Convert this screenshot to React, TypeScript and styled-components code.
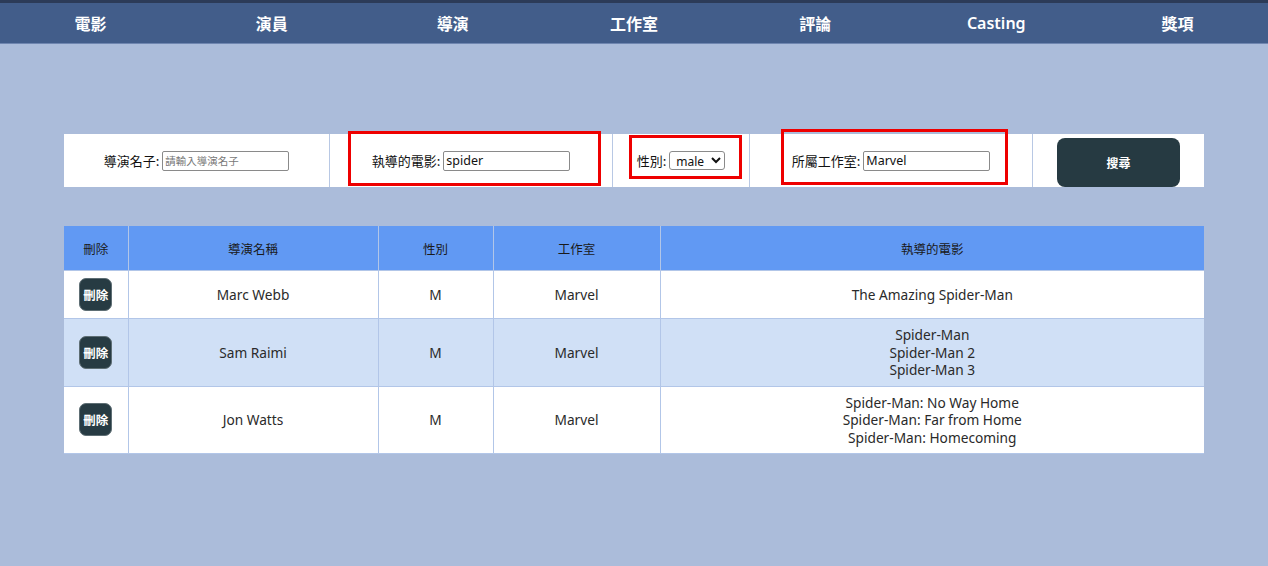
import React from "react";
import styled, { createGlobalStyle } from "styled-components";

const GlobalStyle = createGlobalStyle`
  html, body {
    margin: 0;
    padding: 0;
    background: #abbcda;
    font-family: "Noto Sans", "Noto Sans CJK TC", sans-serif;
  }
`;

const Page = styled.div`
  min-height: 566px;
  background: #abbcda;
`;

const Nav = styled.nav`
  display: grid;
  grid-template-columns: repeat(7, 1fr);
  height: 40px;
  background: #425d8a;
  border-top: 3px solid #2c3b58;
  border-bottom: 1px solid #6f86b0;
`;

const NavItem = styled.a`
  display: flex;
  align-items: center;
  justify-content: center;
  color: #ffffff;
  font-family: "Noto Sans", "Noto Sans CJK TC", sans-serif;
  font-size: 16px;
  font-weight: 600;
  text-decoration: none;
  padding-bottom: 1px;
`;

const Content = styled.main`
  width: 1140px;
  margin: 90px auto 0;
  display: flex;
  flex-direction: column;
  gap: 39px;
`;

const SearchBar = styled.form`
  display: grid;
  grid-template-columns: 265px 283px 137px 283px 172px;
  height: 53px;
  background: #ffffff;
`;

const SearchCell = styled.div<{ $first?: boolean }>`
  position: relative;
  display: flex;
  align-items: center;
  justify-content: center;
  gap: 3px;
  border-left: ${(p) => (p.$first ? "none" : "1px solid #b8c8e4")};
  box-sizing: border-box;
`;

const Label = styled.label`
  font-family: "Noto Sans CJK TC", "Noto Sans", sans-serif;
  font-size: 13px;
  color: #111;
  white-space: nowrap;
`;

const TextInput = styled.input`
  box-sizing: border-box;
  width: 127px;
  height: 20px;
  padding: 0 2px;
  border: 1px solid #8a8a8a;
  border-radius: 2px;
  font-family: "Noto Sans", "Noto Sans CJK TC", sans-serif;
  font-size: 12.5px;
  color: #111;
  outline: none;
  &::placeholder {
    font-family: "Noto Sans CJK TC", sans-serif;
    font-size: 10.5px;
    color: #777;
  }
`;

const Select = styled.select`
  box-sizing: border-box;
  width: 56px;
  height: 19px;
  padding: 0 0 0 2px;
  border: 1px solid #8a8a8a;
  border-radius: 3px;
  background: #fff;
  font-family: "Noto Sans", sans-serif;
  font-size: 12px;
  color: #111;
`;

const Annotation = styled.div<{ $top: number; $left: number; $w: number; $h: number }>`
  position: absolute;
  top: ${(p) => p.$top}px;
  left: ${(p) => p.$left}px;
  width: ${(p) => p.$w}px;
  height: ${(p) => p.$h}px;
  box-sizing: border-box;
  border: 3px solid #ee0000;
  pointer-events: none;
`;

const SearchButton = styled.button`
  width: 123px;
  height: 49px;
  margin-top: 3px;
  border: none;
  border-radius: 8px;
  background: #263a42;
  color: #ffffff;
  font-family: "Noto Sans CJK TC", sans-serif;
  font-size: 12px;
  font-weight: 700;
  cursor: pointer;
`;

const Table = styled.table`
  width: 1140px;
  border-collapse: collapse;
  table-layout: fixed;
  background: #ffffff;
`;

const Col = styled.col<{ $w?: number }>`
  width: ${(p) => (p.$w ? `${p.$w}px` : "auto")};
`;

const HeadCell = styled.th`
  height: 44px;
  padding: 0;
  background: #6199f3;
  border-left: 1px solid #b2c6e8;
  border-bottom: 1px solid #b2c6e8;
  font-family: "Noto Sans CJK TC", sans-serif;
  font-size: 12.5px;
  font-weight: 400;
  color: #1a1a1a;
  &:first-child {
    border-left: none;
  }
`;

const Row = styled.tr<{ $alt?: boolean }>`
  background: ${(p) => (p.$alt ? "#d0e0f6" : "#ffffff")};
`;

const Cell = styled.td`
  padding: 7px 0;
  border-left: 1px solid #b2c6e8;
  border-bottom: 1px solid #b2c6e8;
  text-align: center;
  vertical-align: middle;
  font-family: "Noto Sans", "Noto Sans CJK TC", sans-serif;
  font-size: 13.7px;
  line-height: 17.5px;
  color: #2a2a2a;
  &:first-child {
    border-left: none;
  }
`;

const DeleteButton = styled.button`
  width: 33px;
  height: 33px;
  margin: 0 auto;
  padding: 0;
  border: 1px solid #5e6e74;
  border-radius: 7px;
  background: #273b43;
  color: #ffffff;
  font-family: "Noto Sans CJK TC", sans-serif;
  font-size: 12.5px;
  font-weight: 700;
  display: flex;
  align-items: center;
  justify-content: center;
  cursor: pointer;
`;

const MovieLine = styled.div`
  white-space: nowrap;
`;

const navItems = ["電影", "演員", "導演", "工作室", "評論", "Casting", "獎項"];

const directors = [
  { name: "Marc Webb", gender: "M", studio: "Marvel", movies: ["The Amazing Spider-Man"] },
  { name: "Sam Raimi", gender: "M", studio: "Marvel", movies: ["Spider-Man", "Spider-Man 2", "Spider-Man 3"] },
  {
    name: "Jon Watts",
    gender: "M",
    studio: "Marvel",
    movies: ["Spider-Man: No Way Home", "Spider-Man: Far from Home", "Spider-Man: Homecoming"],
  },
];

const columns = [
  { title: "刪除", w: 64 },
  { title: "導演名稱", w: 250 },
  { title: "性別", w: 115 },
  { title: "工作室", w: 167 },
  { title: "執導的電影", w: 0 },
];

export default function App() {
  return (
    <Page>
      <GlobalStyle />
      <Nav>
        {navItems.map((item) => (
          <NavItem key={item} href="#">
            {item}
          </NavItem>
        ))}
      </Nav>
      <Content>
        <SearchBar onSubmit={(e) => e.preventDefault()}>
          <SearchCell $first>
            <Label>導演名子:</Label>
            <TextInput placeholder="請輸入導演名子" />
          </SearchCell>
          <SearchCell>
            <Annotation $top={-3} $left={18} $w={253} $h={55} />
            <Label>執導的電影:</Label>
            <TextInput defaultValue="spider" />
          </SearchCell>
          <SearchCell>
            <Annotation $top={1} $left={16} $w={113} $h={44} />
            <Label>性別:</Label>
            <Select defaultValue="male">
              <option value="male">male</option>
              <option value="female">female</option>
            </Select>
          </SearchCell>
          <SearchCell>
            <Annotation $top={-5} $left={31} $w={227} $h={56} />
            <Label>所屬工作室:</Label>
            <TextInput defaultValue="Marvel" />
          </SearchCell>
          <SearchCell>
            <SearchButton type="submit">搜尋</SearchButton>
          </SearchCell>
        </SearchBar>
        <Table>
          <colgroup>
            {columns.map((c) => (
              <Col key={c.title} $w={c.w || undefined} />
            ))}
          </colgroup>
          <thead>
            <tr>
              {columns.map((c) => (
                <HeadCell key={c.title}>{c.title}</HeadCell>
              ))}
            </tr>
          </thead>
          <tbody>
            {directors.map((d, i) => (
              <Row key={d.name} $alt={i % 2 === 1}>
                <Cell>
                  <DeleteButton>刪除</DeleteButton>
                </Cell>
                <Cell>{d.name}</Cell>
                <Cell>{d.gender}</Cell>
                <Cell>{d.studio}</Cell>
                <Cell>
                  {d.movies.map((m) => (
                    <MovieLine key={m}>{m}</MovieLine>
                  ))}
                </Cell>
              </Row>
            ))}
          </tbody>
        </Table>
      </Content>
    </Page>
  );
}
